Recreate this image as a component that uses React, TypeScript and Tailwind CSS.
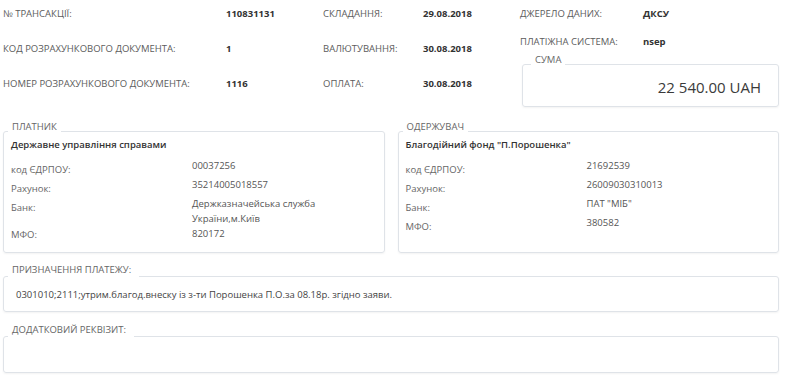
import React from 'react';

interface PartyRow {
  label: string;
  value: React.ReactNode;
  labelPad?: string;
}

interface Party {
  legend: string;
  name: string;
  rows: PartyRow[];
}

const payer: Party = {
  legend: 'ПЛАТНИК',
  name: 'Державне управління справами',
  rows: [
    { label: 'код ЄДРПОУ:', value: '00037256' },
    { label: 'Рахунок:', value: '35214005018557' },
    { label: 'Банк:', value: <>Держказначейська служба<br />України,м.Київ</> },
    { label: 'МФО:', value: '820172', labelPad: 'pt-[1px]' },
  ],
};

const receiver: Party = {
  legend: 'ОДЕРЖУВАЧ',
  name: 'Благодійний фонд "П.Порошенка"',
  rows: [
    { label: 'код ЄДРПОУ:', value: '21692539' },
    { label: 'Рахунок:', value: '26009030310013' },
    { label: 'Банк:', value: 'ПАТ "МІБ"' },
    { label: 'МФО:', value: '380582' },
  ],
};

const fieldsetCls =
  'rounded-[3px] border border-[#dfe3e8] shadow-[0_1px_2px_rgba(0,0,0,0.05)] min-w-0';
const legendCls = 'px-[4px] text-[9.5px] leading-[12px] uppercase text-[#666]';

const Label = ({ children }: { children: React.ReactNode }) => (
  <div className="text-[9.5px] leading-[15px] uppercase text-[#5c5c5c]">{children}</div>
);

const Value = ({ children }: { children: React.ReactNode }) => (
  <div className="text-[9.5px] leading-[15px] font-bold text-[#333]">{children}</div>
);

const PartyBox = ({ party }: { party: Party }) => (
  <fieldset className={`${fieldsetCls} pl-[7px] pr-[7px] pb-[10px]`}>
    <legend className={`${legendCls} -ml-[3px] pb-[9px]`}>{party.legend}</legend>
    <div className="-mt-[5px] text-[9.5px] leading-[15px] font-semibold text-[#333]">{party.name}</div>
    <div className="mt-[6px] flex flex-col">
      {party.rows.map((row) => (
        <div key={row.label} className="grid grid-cols-[181px_1fr]">
          <div className={`${row.labelPad ?? 'pt-[4px]'} text-[9.5px] leading-[15px] text-[#666]`}>{row.label}</div>
          <div className="text-[9.5px] leading-[15px] text-[#555]">{row.value}</div>
        </div>
      ))}
    </div>
  </fieldset>
);

export default function App() {
  return (
    <div className="w-[790px] h-[380px] bg-white pl-[3px] font-['Open_Sans',sans-serif] overflow-hidden">
      <div className="w-[776px]">
        {/* header info */}
        <div className="flex">
          <div className="grid grid-cols-[223px_97px_100px_97px] gap-y-[20px] pt-[6px] self-start">
            <Label>№ ТРАНСАКЦІЇ:</Label>
            <Value>110831131</Value>
            <Label>СКЛАДАННЯ:</Label>
            <Value>29.08.2018</Value>

            <Label>КОД РОЗРАХУНКОВОГО ДОКУМЕНТА:</Label>
            <Value>1</Value>
            <Label>ВАЛЮТУВАННЯ:</Label>
            <Value>30.08.2018</Value>

            <Label>НОМЕР РОЗРАХУНКОВОГО ДОКУМЕНТА:</Label>
            <Value>1116</Value>
            <Label>ОПЛАТА:</Label>
            <Value>30.08.2018</Value>
          </div>

          <div className="flex-1 pt-[6px]">
            <div className="grid grid-cols-[123px_1fr] gap-y-[13px]">
              <Label>ДЖЕРЕЛО ДАНИХ:</Label>
              <Value>ДКСУ</Value>
              <Label>ПЛАТІЖНА СИСТЕМА:</Label>
              <Value>nsep</Value>
            </div>
            <fieldset className={`${fieldsetCls} ml-[2px] mt-[5px] pr-[17px] pb-[9px]`}>
              <legend className={`${legendCls} ml-[8px] pb-[8px]`}>СУМА</legend>
              <div className="mt-[3px] text-right text-[15px] leading-[20px] font-medium text-[#3a3a3a]">
                22 540.00 UAH
              </div>
            </fieldset>
          </div>
        </div>

        {/* payer / receiver */}
        <div className="mt-[14px] grid grid-cols-2 gap-x-[13px]">
          <PartyBox party={payer} />
          <PartyBox party={receiver} />
        </div>

        {/* purpose */}
        <fieldset className={`${fieldsetCls} mt-[11px] pl-[12px] pb-[9px]`}>
          <legend className={`${legendCls} -ml-[8px] pr-[8px] pb-[12px]`}>ПРИЗНАЧЕННЯ ПЛАТЕЖУ:</legend>
          <div className="-mt-[1px] text-[9.5px] leading-[15px] text-[#444]">
            0301010;2111;утрим.благод.внеску із з-ти Порошенка П.О.за 08.18р. згідно заяви.
          </div>
        </fieldset>

        {/* extra */}
        <fieldset className={`${fieldsetCls} mt-[12px] pl-[12px] pb-[24px]`}>
          <legend className={`${legendCls} -ml-[8px] pr-[8px] pb-[12px]`}>ДОДАТКОВИЙ РЕКВІЗИТ:</legend>
        </fieldset>
      </div>
    </div>
  );
}
